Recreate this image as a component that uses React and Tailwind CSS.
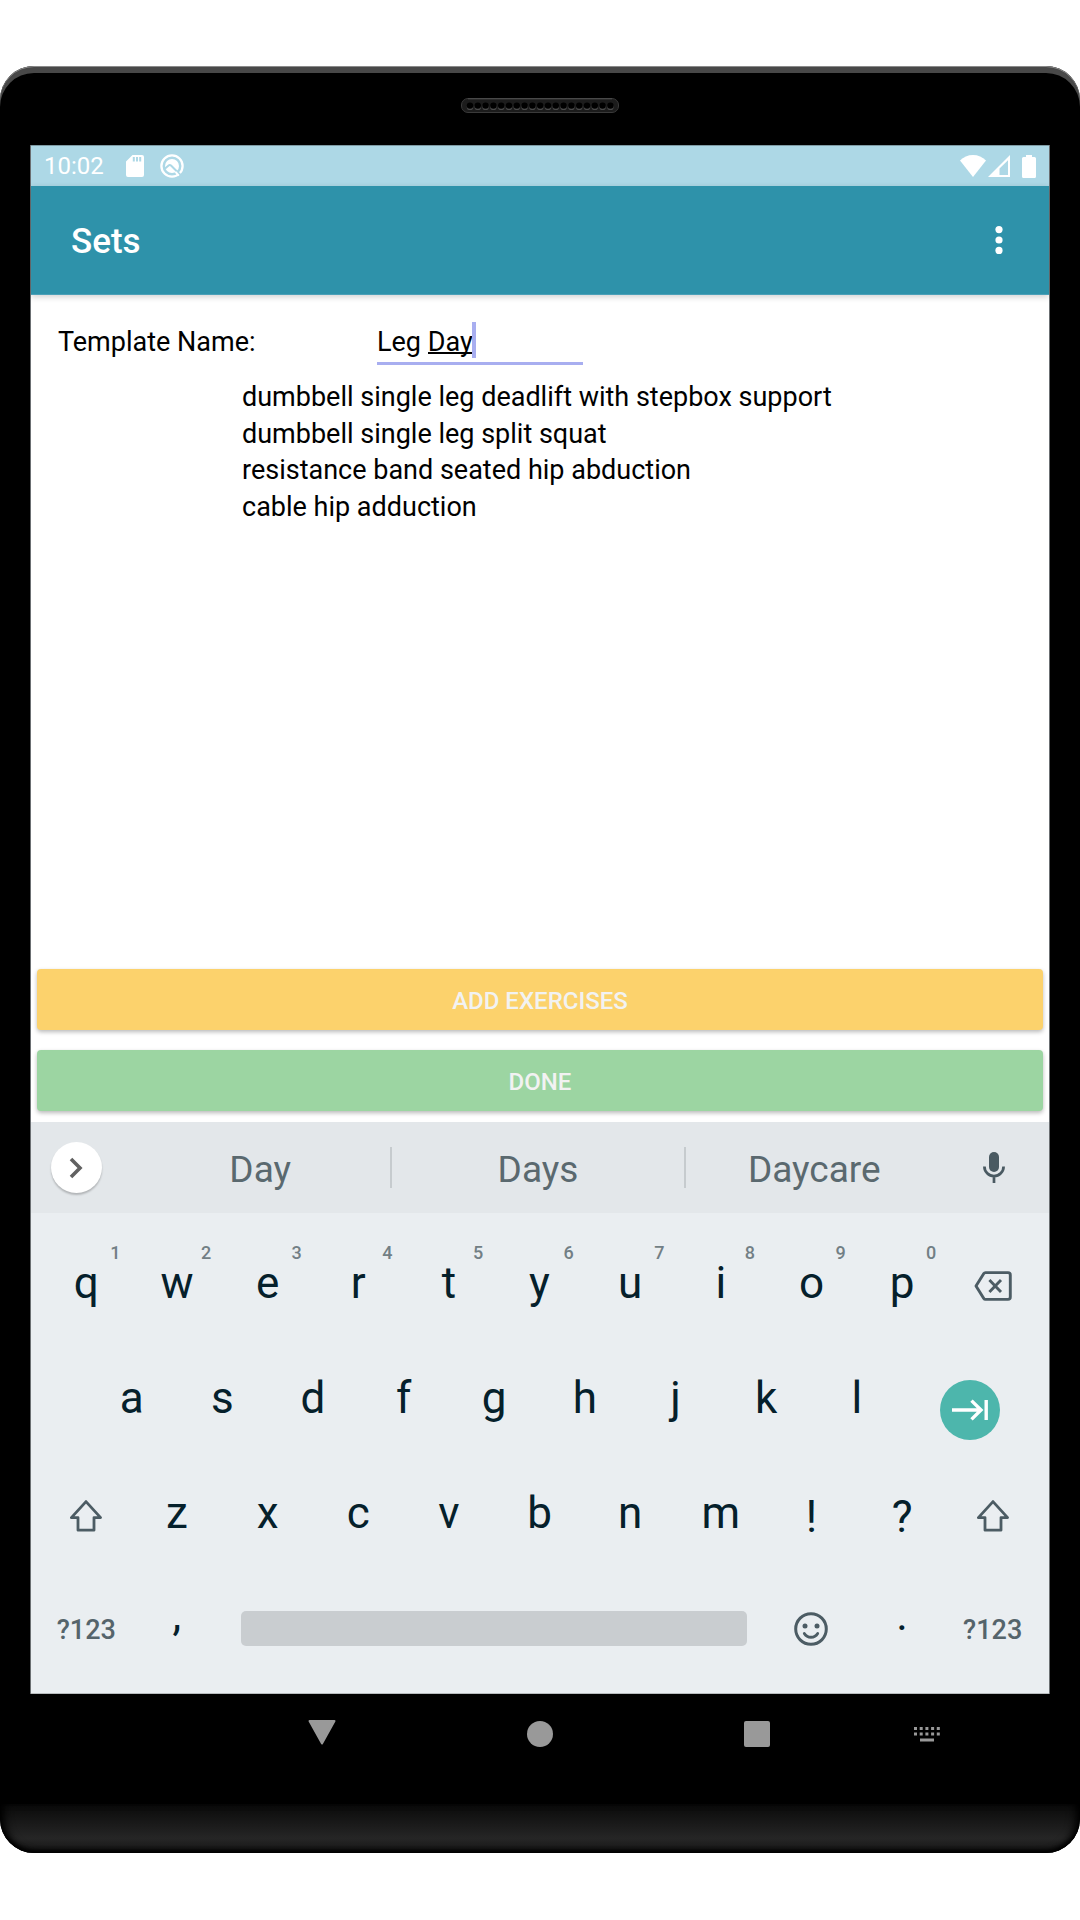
import React from "react";

const exercises = [
  "dumbbell single leg deadlift with stepbox support",
  "dumbbell single leg split squat",
  "resistance band seated hip abduction",
  "cable hip adduction",
];

const topRow = ["q", "w", "e", "r", "t", "y", "u", "i", "o", "p"];
const homeRow = ["a", "s", "d", "f", "g", "h", "j", "k", "l"];
const bottomRow = ["z", "x", "c", "v", "b", "n", "m"];

function Speaker() {
  const holes = Array.from({ length: 19 }, (_, i) => 9 + i * 7.8);
  return (
    <svg width="158" height="15" viewBox="0 0 158 15" aria-hidden="true">
      <rect x="0.5" y="0.5" width="157" height="14" rx="6.5" fill="#1c1c1c" stroke="#3a3a3a" />
      <path d="M7 0.8H151" stroke="#505050" />
      {holes.map((x) => (
        <g key={x}>
          <circle cx={x} cy="8.9" r="3.2" fill="#4a4a4a" />
          <circle cx={x} cy="7.6" r="3.2" fill="#000" />
        </g>
      ))}
    </svg>
  );
}

function StatusBar() {
  return (
    <div className="flex h-[41px] items-center border-t border-[#7f9ba4] bg-[#add8e6] px-[13px] text-white">
      <span className="w-[82px] text-[24px] leading-none">10:02</span>
      <svg width="18" height="22" viewBox="0 0 18 22" aria-hidden="true">
        <path
          fillRule="evenodd"
          fill="currentColor"
          d="M6.5 0H16a2 2 0 0 1 2 2v18a2 2 0 0 1-2 2H2a2 2 0 0 1-2-2V6.5zM6.8 2v4.4h2V2zM10 2v4.4h2V2zM13.2 2v4.4h2V2z"
        />
      </svg>
      <svg className="ml-4" width="24" height="24" viewBox="0 0 24 24" aria-hidden="true">
        <circle cx="12" cy="12" r="10.6" fill="none" stroke="currentColor" strokeWidth="2.3" />
        <circle cx="12" cy="12" r="7" fill="currentColor" />
        <path d="M4.500 15L8.600 11.400Q9.800 10.400 11 11.500L22.500 23" fill="none" stroke="#add8e6" strokeWidth="2" />
        <path d="M15.500 17.800L18.800 21.600" stroke="currentColor" strokeWidth="2" />
      </svg>
      <div className="ml-auto flex items-center">
        <svg width="26" height="22" viewBox="0 0 26 22" aria-hidden="true">
          <path fill="currentColor" d="M13 22L0 5.6C3.4 2 8 0 13 0s9.600 2 13 5.600z" />
        </svg>
        <svg className="ml-0.5" width="22" height="22" viewBox="0 0 22 22" aria-hidden="true">
          <path
            fillRule="evenodd"
            fill="currentColor"
            d="M22 0v22H0zM20 5.200L11.500 13.600V20H20z"
          />
        </svg>
        <svg className="ml-3" width="14" height="23" viewBox="0 0 14 23" aria-hidden="true">
          <path
            fill="currentColor"
            d="M4 0h6v2h2.500A1.500 1.500 0 0 1 14 3.500v18a1.500 1.500 0 0 1-1.500 1.500h-11A1.500 1.500 0 0 1 0 21.500v-18A1.500 1.500 0 0 1 1.500 2H4z"
          />
        </svg>
      </div>
    </div>
  );
}

function AppBar() {
  return (
    <header className="z-10 flex h-[109px] items-center justify-between border-b border-[#4ba0b8] bg-[#2e92aa] pr-[30px] pl-10 text-white shadow-[0_2px_6px_rgba(0,0,0,0.18)]">
      <h1 className="pt-[3px] text-[35px] leading-none font-medium">Sets</h1>
      <button type="button" aria-label="More options" className="flex h-10 w-10 items-center justify-center">
        <svg width="8" height="28" viewBox="0 0 8 28" fill="currentColor" aria-hidden="true">
          <circle cx="4" cy="3.600" r="3.600" />
          <circle cx="4" cy="14" r="3.600" />
          <circle cx="4" cy="24.400" r="3.600" />
        </svg>
      </button>
    </header>
  );
}

function TemplateForm() {
  return (
    <main className="flex flex-1 flex-col bg-white px-[6px] text-black">
      <div className="flex items-start pt-[22px] pl-[21px]">
        <label htmlFor="template-name" className="w-[319px] pt-[7px] text-[27px] leading-[36px]">
          Template Name:
        </label>
        <div className="relative">
          <input
            id="template-name"
            type="text"
            defaultValue="Leg Day"
            className="block h-[48px] w-[206px] border-b-[3px] border-[#a8aef0] bg-transparent pt-[7px] pb-[2px] text-[27px] leading-[36px] outline-none"
          />
          <span className="absolute top-[35px] left-[51px] h-[2px] w-[45px] bg-black" />
          <span className="absolute top-[5px] left-[95px] h-[36px] w-[4px] bg-[#a8aef0]" />
        </div>
      </div>
      <ul className="mt-[14px] grid h-[146px] grid-rows-4 pl-[205px] text-[27px] leading-[36px]">
        {exercises.map((name) => (
          <li key={name}>{name}</li>
        ))}
      </ul>
      <div className="mt-auto flex flex-col gap-5 pb-[11px] text-[24px] font-medium text-[#f2f2f2]">
        <button type="button" className="h-[61px] rounded-sm bg-[#fcd26c] pt-[2px] shadow-[0_2px_4px_rgba(0,0,0,0.28)]">
          ADD EXERCISES
        </button>
        <button type="button" className="h-[61px] rounded-sm bg-[#9cd5a2] pt-[2px] shadow-[0_2px_4px_rgba(0,0,0,0.28)]">
          DONE
        </button>
      </div>
    </main>
  );
}

function Suggestions() {
  return (
    <div className="flex h-[91px] items-center bg-[#e3e7ea] text-[37px] text-[#5a696f]">
      <div className="flex w-[99px] pl-5">
        <button
          type="button"
          aria-label="Expand toolbar"
          className="flex h-[51px] w-[51px] items-center justify-center rounded-full bg-white pr-[2px] text-[#616161] shadow-[0_2px_2px_rgba(0,0,0,0.22)]"
        >
          <svg width="14" height="22" viewBox="0 0 14 22" fill="none" stroke="currentColor" strokeWidth="3.600" aria-hidden="true">
            <path d="M2 2l9 9-9 9" />
          </svg>
        </button>
      </div>
      <button type="button" className="h-[41px] flex-[262] pt-[2px] leading-[41px]">Day</button>
      <button type="button" className="h-[41px] flex-[293] border-x-2 border-[#c6cbce] pt-[2px] leading-[41px]">Days</button>
      <button type="button" className="h-[41px] flex-[259] pt-[2px] leading-[41px]">Daycare</button>
      <div className="flex w-[106px] justify-center pr-[4px]">
        <button type="button" aria-label="Voice input">
          <svg width="22" height="31" viewBox="0 0 22 31" aria-hidden="true">
            <rect x="6" y="0" width="10" height="20" rx="5" fill="#4a5a62" />
            <path d="M1.400 14.500a9.600 9.600 0 0 0 19.200 0M11 24v7" fill="none" stroke="#4a5a62" strokeWidth="2.700" />
          </svg>
        </button>
      </div>
    </div>
  );
}

function LetterKey({ letter, hint }) {
  return (
    <button type="button" className="relative flex flex-[2] items-center justify-center pb-[6px]">
      {letter}
      {hint !== undefined && (
        <span className="absolute top-[15px] left-1/2 ml-[24px] text-[18px] leading-5 font-medium text-[#727f85]">
          {hint}
        </span>
      )}
    </button>
  );
}

function IconKey({ label, children }) {
  return (
    <button type="button" aria-label={label} className="flex flex-[2] items-center justify-center text-[#4c5c64]">
      {children}
    </button>
  );
}

function ShiftIcon() {
  return (
    <svg width="34" height="34" viewBox="0 0 34 34" fill="none" stroke="currentColor" strokeWidth="2.800" strokeLinejoin="round" aria-hidden="true">
      <path d="M17 2.600L2.400 18.600H9V31.200H25V18.600H31.600z" />
    </svg>
  );
}

function SymbolsKey() {
  return (
    <button type="button" className="flex items-center justify-center text-[27px] font-medium text-[#55646b]">
      ?123
    </button>
  );
}

function Keyboard() {
  return (
    <section aria-label="Keyboard">
      <Suggestions />
      <div className="border-b border-[#b8bcbe] bg-[#eaeef1] pt-[15px] pr-[11px] pb-[5px] pl-[10px] text-[44px] leading-none text-[#05202b]">
        <div className="flex h-[115px]">
          {topRow.map((letter, i) => (
            <LetterKey key={letter} letter={letter} hint={(i + 1) % 10} />
          ))}
          <IconKey label="Backspace">
            <svg width="38" height="30" viewBox="0 0 38 30" fill="none" stroke="currentColor" strokeWidth="2.900" strokeLinejoin="round" aria-hidden="true">
              <path d="M11.500 1.600H34a2.300 2.300 0 0 1 2.300 2.300V26.100a2.300 2.300 0 0 1-2.300 2.300H11.500Q10.400 28.400 9.800 27.400L2 15 9.800 2.600Q10.400 1.600 11.500 1.600zM15.400 9L27 21M27 9L15.400 21" />
            </svg>
          </IconKey>
        </div>
        <div className="flex h-[115px]">
          <span className="flex-[1]" />
          {homeRow.map((letter) => (
            <LetterKey key={letter} letter={letter} />
          ))}
          <div className="flex flex-[3] items-center justify-center pt-[18px]">
            <button type="button" aria-label="Next" className="flex h-[60px] w-[60px] items-center justify-center rounded-full bg-[#4db6ac] text-white">
              <svg width="36" height="22" viewBox="0 0 36 22" fill="none" stroke="currentColor" strokeWidth="3.400" aria-hidden="true">
                <path d="M0 11H28M19.500 1.600L29 11l-9.500 9.400M34.200 1V21" />
              </svg>
            </button>
          </div>
        </div>
        <div className="flex h-[115px]">
          <IconKey label="Shift">
            <ShiftIcon />
          </IconKey>
          {bottomRow.map((letter) => (
            <LetterKey key={letter} letter={letter} />
          ))}
          <button type="button" className="flex flex-[2] items-center justify-center pt-[3px]">!</button>
          <button type="button" className="flex flex-[2] items-center justify-center pt-[3px]">?</button>
          <IconKey label="Right shift">
            <ShiftIcon />
          </IconKey>
        </div>
        <div className="grid h-[115px] grid-cols-11 pb-px">
          <SymbolsKey />
          <button type="button" className="pb-[31px]">,</button>
          <div className="col-span-6 flex items-center px-[19px] pb-[3px]">
            <button type="button" aria-label="Space" className="h-[35px] w-full rounded-[5px] bg-[#c9cdd0]" />
          </div>
          <button type="button" aria-label="Emoji" className="flex items-center justify-center pb-[3px] text-[#4c5c64]">
            <svg width="34" height="34" viewBox="0 0 34 34" fill="none" stroke="currentColor" strokeWidth="3" aria-hidden="true">
              <circle cx="17" cy="17" r="15.300" />
              <circle cx="11" cy="14" r="2.500" fill="currentColor" stroke="none" />
              <circle cx="23" cy="14" r="2.500" fill="currentColor" stroke="none" />
              <path d="M10.300 21.500c3 5 10.400 5 13.400 0" strokeWidth="2.800" strokeLinecap="round" />
            </svg>
          </button>
          <button type="button" className="pb-[31px]">.</button>
          <SymbolsKey />
        </div>
      </div>
    </section>
  );
}

function NavBar() {
  const dots = [0, 5.700, 11.400, 17.100, 22.800];
  return (
    <nav className="flex h-[110px] items-start bg-black pt-[26px] pr-[12px] pl-[182px] text-[#999]">
      <button type="button" aria-label="Back" className="flex h-[28px] flex-[218] items-start justify-center">
        <svg width="28" height="25" viewBox="0 0 28 25" aria-hidden="true">
          <path fill="currentColor" stroke="currentColor" strokeWidth="2" strokeLinejoin="round" d="M1.500 1H26.500L14 23.500z" />
        </svg>
      </button>
      <button type="button" aria-label="Home" className="flex h-[28px] flex-[218] items-center justify-center">
        <span className="h-[26px] w-[26px] rounded-full bg-[#999]" />
      </button>
      <button type="button" aria-label="Overview" className="flex h-[28px] flex-[218] items-center justify-center">
        <span className="h-[26px] w-[26px] rounded-[2px] bg-[#999]" />
      </button>
      <button type="button" aria-label="Switch keyboard" className="flex h-[28px] flex-[122] items-center justify-center">
        <svg width="26" height="16" viewBox="0 0 26 16" fill="currentColor" aria-hidden="true">
          {dots.map((x) => (
            <React.Fragment key={x}>
              <rect x={x} y="1" width="3" height="3" />
              <rect x={x} y="6.500" width="3" height="3" />
            </React.Fragment>
          ))}
          <rect x="6" y="12.500" width="14" height="3" />
        </svg>
      </button>
      <span className="flex-[49]" />
    </nav>
  );
}

export default function App() {
  return (
    <div className="flex min-h-screen flex-col bg-white pt-[66px] pb-[67px] font-['Roboto',sans-serif]">
      <div className="flex flex-1 flex-col overflow-hidden rounded-[34px] bg-black shadow-[inset_0_1px_0_#8a8a8a,inset_0_7px_0_#484848]">
        <div className="flex h-[79px] justify-center pt-[32px]">
          <Speaker />
        </div>
        <div className="mx-[30px] flex flex-1 flex-col border-x border-[#6b6f72]">
          <StatusBar />
          <AppBar />
          <TemplateForm />
          <Keyboard />
        </div>
        <div className="mx-[31px]">
          <NavBar />
        </div>
        <div className="h-[49px] rounded-b-[34px] bg-linear-to-b from-[#0a0a0a] via-[#262626] via-70% to-[#141414] shadow-[inset_0_-3px_4px_#000,inset_8px_0_10px_-4px_#000,inset_-8px_0_10px_-4px_#000]" />
      </div>
    </div>
  );
}
